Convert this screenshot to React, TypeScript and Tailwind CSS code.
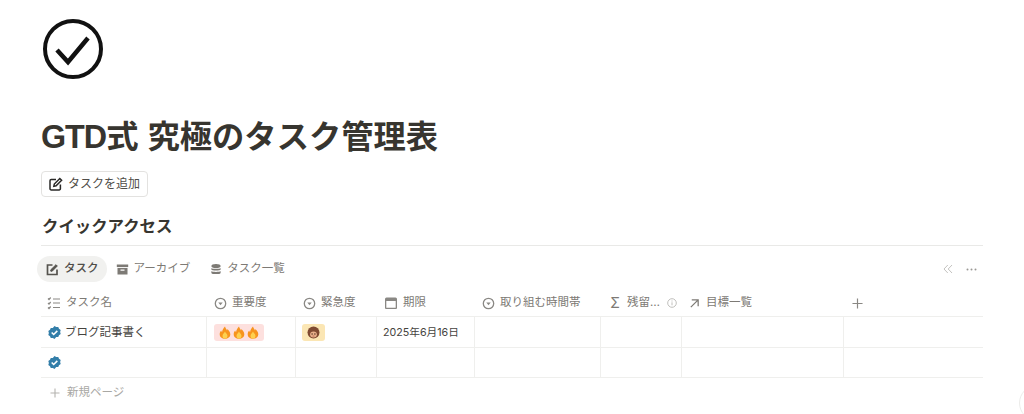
const FONT = "font-['Inter','Noto_Sans_CJK_JP',sans-serif]";

const columns = [
  { w: "w-[166px]" },
  { w: "w-[89px]" },
  { w: "w-[81px]" },
  { w: "w-[98px]" },
  { w: "w-[126px]" },
  { w: "w-[81px]" },
  { w: "w-[162px]" },
  { w: "w-[139px]" },
];

const SelectIcon = () => (
  <svg width="13" height="13" viewBox="0 0 14 14" fill="none" className="shrink-0">
    <circle cx="7" cy="7" r="5.6" stroke="#8a8884" strokeWidth="1.4" />
    <path d="M4.6 5.8h4.8L7 8.9z" fill="#8a8884" />
  </svg>
);

const VerifiedIcon = () => (
  <svg width="15" height="15" viewBox="0 0 16 16" className="shrink-0">
    <path
      d="M8 1l1.8 1.2 2.2-.1.8 2 1.8 1.3-.6 2.1.6 2.1-1.8 1.3-.8 2-2.2-.1L8 14.9l-1.8-1.1-2.2.1-.8-2-1.8-1.3.6-2.1-.6-2.1 1.8-1.3.8-2 2.2.1z"
      fill="#337ea9"
    />
    <path d="M5 8l2.1 2.1L11 6.2" fill="none" stroke="#fff" strokeWidth="1.7" />
  </svg>
);

const Fire = () => (
  <svg width="12" height="13" viewBox="0 0 12 13">
    <path
      d="M6 .4c.5 2 1.600 2.600 2 4 .3-.4.4-1 .4-1.500C10 4.300 11.300 6.300 11.300 8.200c0 2.800-2.400 4.500-5.300 4.500S.7 11 .7 8.200c0-1.600.7-2.900 1.500-3.700.1.800.4 1.300.9 1.600C3.100 4 4.500 2 6 .4z"
      fill="#f7941d"
    />
    <path d="M6 5.500c.3 1.400 2.500 2.300 2.500 4.400 0 1.600-1.100 2.600-2.500 2.600s-2.500-1-2.500-2.600c0-2 2-2.700 2.500-4.400z" fill="#fdd04f" />
  </svg>
);

const Face = () => (
  <svg width="13" height="13" viewBox="0 0 13 13">
    <circle cx="6.500" cy="6.500" r="6" fill="#7f4a32" />
    <ellipse cx="6.500" cy="8.500" rx="3.400" ry="3" fill="#e9b08c" />
    <circle cx="5.100" cy="8" r=".7" fill="#4a2a1c" />
    <circle cx="7.900" cy="8" r=".7" fill="#4a2a1c" />
    <path d="M5.500 10h2" stroke="#b0644a" strokeWidth=".8" />
  </svg>
);

const HeaderCell = ({ icon, label, extra, w }: { icon: React.ReactNode; label: string; extra?: React.ReactNode; w: string }) => (
  <div className={`${w} flex shrink-0 items-center gap-[5px] pl-[7px] pt-[1px] text-[11.5px] text-[#7d7a75]`}>
    {icon}
    <span>{label}</span>
    {extra}
  </div>
);

const Row = ({ cells, h }: { cells: React.ReactNode[]; h: string }) => (
  <div className={`flex ${h} border-b border-[#efefed]`}>
    {cells.map((cell, i) => (
      <div
        key={i}
        className={`${columns[i].w} flex shrink-0 items-center ${i < 7 ? "border-r border-[#efefed]" : ""} ${i === 0 ? "gap-[3px] pl-[6px]" : "pl-[7px]"}`}
      >
        {cell}
      </div>
    ))}
  </div>
);

export default function App() {
  return (
    <div className={`${FONT} relative h-[414px] w-[1024px] overflow-hidden bg-white pl-[41px] pt-[18px] text-[#37352f]`}>
      {/* page icon */}
      <svg width="62" height="62" viewBox="0 0 62 62" fill="none" className="ml-[1px]">
        <circle cx="31" cy="31" r="28" stroke="#111" strokeWidth="4" />
        <path d="M15 32l11 12L46 20" stroke="#111" strokeWidth="4.500" />
      </svg>

      <h1 className="mt-[37px] font-['Liberation_Sans','Noto_Sans_CJK_JP',sans-serif] text-[32.3px] leading-[40px] font-bold text-[#37352f]">
        <span className="tracking-[-1px]">GTD</span>式 究極のタスク管理表
      </h1>

      <button className="mt-[14px] flex h-[26px] w-[107px] items-center gap-[5px] rounded-[4px] border border-[#e3e2e0] pl-[6px] text-[12px] text-[#4f4d48]">
        <svg width="15" height="15" viewBox="0 0 15 15" fill="none" stroke="#2a2927" strokeWidth="1.500">
          <path d="M8 2.500H3.200a1.200 1.200 0 0 0-1.200 1.200v8a1.200 1.200 0 0 0 1.200 1.200h8a1.200 1.200 0 0 0 1.200-1.200V7.500" />
          <path d="M5.800 9.300l.5-2.300L11.800 1.500l1.800 1.800-5.500 5.500z" />
        </svg>
        タスクを追加
      </button>

      <h2 className="mt-[17px] pl-[1px] text-[16.4px] leading-[24px] font-semibold text-[#37352f]">クイックアクセス</h2>
      <div className="mt-[7px] h-px w-[942px] bg-[#e9e9e7]" />

      {/* view tabs */}
      <div className="mt-[10px] flex h-[26px] w-[942px] items-center text-[11.5px] text-[#7d7a75]">
        <div className="-ml-[4px] flex h-[26px] items-center gap-[5px] rounded-full bg-[#f1f1ef] pl-[9px] pr-[8px] font-medium text-[#4f4d48]">
          <svg width="13" height="13" viewBox="0 0 13 13" fill="none" stroke="#55534e" strokeWidth="1.700">
            <path d="M6.500 2H1.500v9.500H11V6.500" />
            <path d="M4.800 8.200V6.800L10 1.700l1.300 1.300-5.100 5.200z" fill="#55534e" strokeWidth="1" />
          </svg>
          タスク
        </div>
        <div className="ml-[9px] flex items-center gap-[5px]">
          <svg width="13" height="13" viewBox="0 0 13 13">
            <path d="M.8 1.500h11.400v2.600H.8z" fill="#7d7a75" />
            <path fillRule="evenodd" d="M1.500 5h10v6.500h-10zM4.500 6.500v1.200h4V6.500z" fill="#7d7a75" />
          </svg>
          アーカイブ
        </div>
        <div className="ml-[20px] flex items-center gap-[5px]">
          <svg width="12" height="13" viewBox="0 0 13 13" fill="#7d7a75">
            <ellipse cx="6.500" cy="2.800" rx="5" ry="2.200" />
            <path d="M1.500 4.800c1 1.300 9 1.300 10 0v1.700c0 1.400-10 1.400-10 0zM1.500 8.200c1 1.300 9 1.300 10 0v2c0 1.700-10 1.700-10 0z" />
          </svg>
          タスク一覧
        </div>
        <div className="ml-auto flex items-center gap-[13px] pr-[6px]">
          <svg width="10" height="10" viewBox="0 0 10 10" fill="none" stroke="#c4c3c0" strokeWidth="1">
            <path d="M4.800 1L1 5l3.800 4M9 1L5.200 5 9 9" />
          </svg>
          <svg width="11" height="3" viewBox="0 0 11 3" fill="#9a9894">
            <circle cx="1.500" cy="1.500" r="1" />
            <circle cx="5.500" cy="1.500" r="1" />
            <circle cx="9.500" cy="1.500" r="1" />
          </svg>
        </div>
      </div>

      {/* table */}
      <div className="mt-[7px] w-[942px]">
        <div className="flex h-[28px] border-b border-[#efefed]">
          <HeaderCell
            w={columns[0].w}
            label="タスク名"
            icon={
              <svg width="14" height="14" viewBox="0 0 14 14" fill="none" stroke="#8a8884" strokeWidth="1.200" className="-ml-[1px] shrink-0">
                <path d="M1 2.500l1 1 1.700-2M1 7l1 1 1.700-2M1 11.500l1 1 1.700-2M6 3h7M6 7h7M6 11.500h7" />
              </svg>
            }
          />
          <HeaderCell w={columns[1].w} label="重要度" icon={<SelectIcon />} />
          <HeaderCell w={columns[2].w} label="緊急度" icon={<SelectIcon />} />
          <HeaderCell
            w={columns[3].w}
            label="期限"
            icon={
              <svg width="14" height="14" viewBox="0 0 14 14" fill="#8a8884" className="shrink-0">
                <path fillRule="evenodd" d="M2.500 1.500h9A1.500 1.500 0 0 1 13 3v9a1 1 0 0 1-1 1H2a1 1 0 0 1-1-1V3a1.500 1.500 0 0 1 1.500-1.500zM2.300 5v6.700h9.400V5z" />
              </svg>
            }
          />
          <HeaderCell w={columns[4].w} label="取り組む時間帯" icon={<SelectIcon />} />
          <HeaderCell
            w={columns[5].w}
            label="残留…"
            icon={<span className="w-[14px] shrink-0 text-center text-[14px] leading-none text-[#7d7a75]">Σ</span>}
            extra={
              <svg width="10" height="10" viewBox="0 0 10 10" fill="none" stroke="#b9b8b4" strokeWidth=".9" className="ml-[2px] shrink-0">
                <circle cx="5" cy="5" r="4.300" />
                <path d="M5 4.300v3M5 2.500v1" />
              </svg>
            }
          />
          <HeaderCell
            w={columns[6].w}
            label="目標一覧"
            icon={
              <svg width="11" height="11" viewBox="0 0 12 12" fill="none" stroke="#7d7a75" strokeWidth="1.400" className="mr-[1px] shrink-0">
                <path d="M3 2h7v7M10 2L2 10" />
              </svg>
            }
          />
          <div className={`${columns[7].w} flex shrink-0 items-center pl-[8px] pt-[1px]`}>
            <svg width="11" height="11" viewBox="0 0 12 12" stroke="#8a8884" strokeWidth="1.300">
              <path d="M6 .5v11M.5 6h11" />
            </svg>
          </div>
        </div>
        <Row
          h="h-[31px]"
          cells={[
            <>
              <VerifiedIcon />
              <span className="mt-[2px] text-[11.5px] text-[#45433e]">ブログ記事書く</span>
            </>,
            <span className="flex h-[17px] w-[50px] items-center justify-center gap-[2px] rounded-[3px] bg-[#fde0de]">
              <Fire />
              <Fire />
              <Fire />
            </span>,
            <span className="-ml-[1px] flex h-[17px] w-[23px] items-center justify-center rounded-[3px] bg-[#fbe6b4]">
              <Face />
            </span>,
            <span className="-ml-[1px] mt-[2px] text-[10.7px] text-[#45433e]">2025年6月16日</span>,
            null,
            null,
            null,
            null,
          ]}
        />
        <Row h="h-[30px]" cells={[<VerifiedIcon />, null, null, null, null, null, null, null]} />
        <div className="flex h-[30px] items-center gap-[7px] pl-[9px] text-[11.5px] text-[#a9a8a4]">
          <svg width="10" height="10" viewBox="0 0 10 10" stroke="#b5b4b0" strokeWidth="1.100">
            <path d="M5 .5v9M.5 5h9" />
          </svg>
          新規ページ
        </div>
      </div>

      {/* help button, cut off by the window edge */}
      <div className="absolute left-[1019px] top-[385px] h-9 w-9 rounded-full border border-[#ececea] bg-white" />
    </div>
  );
}
